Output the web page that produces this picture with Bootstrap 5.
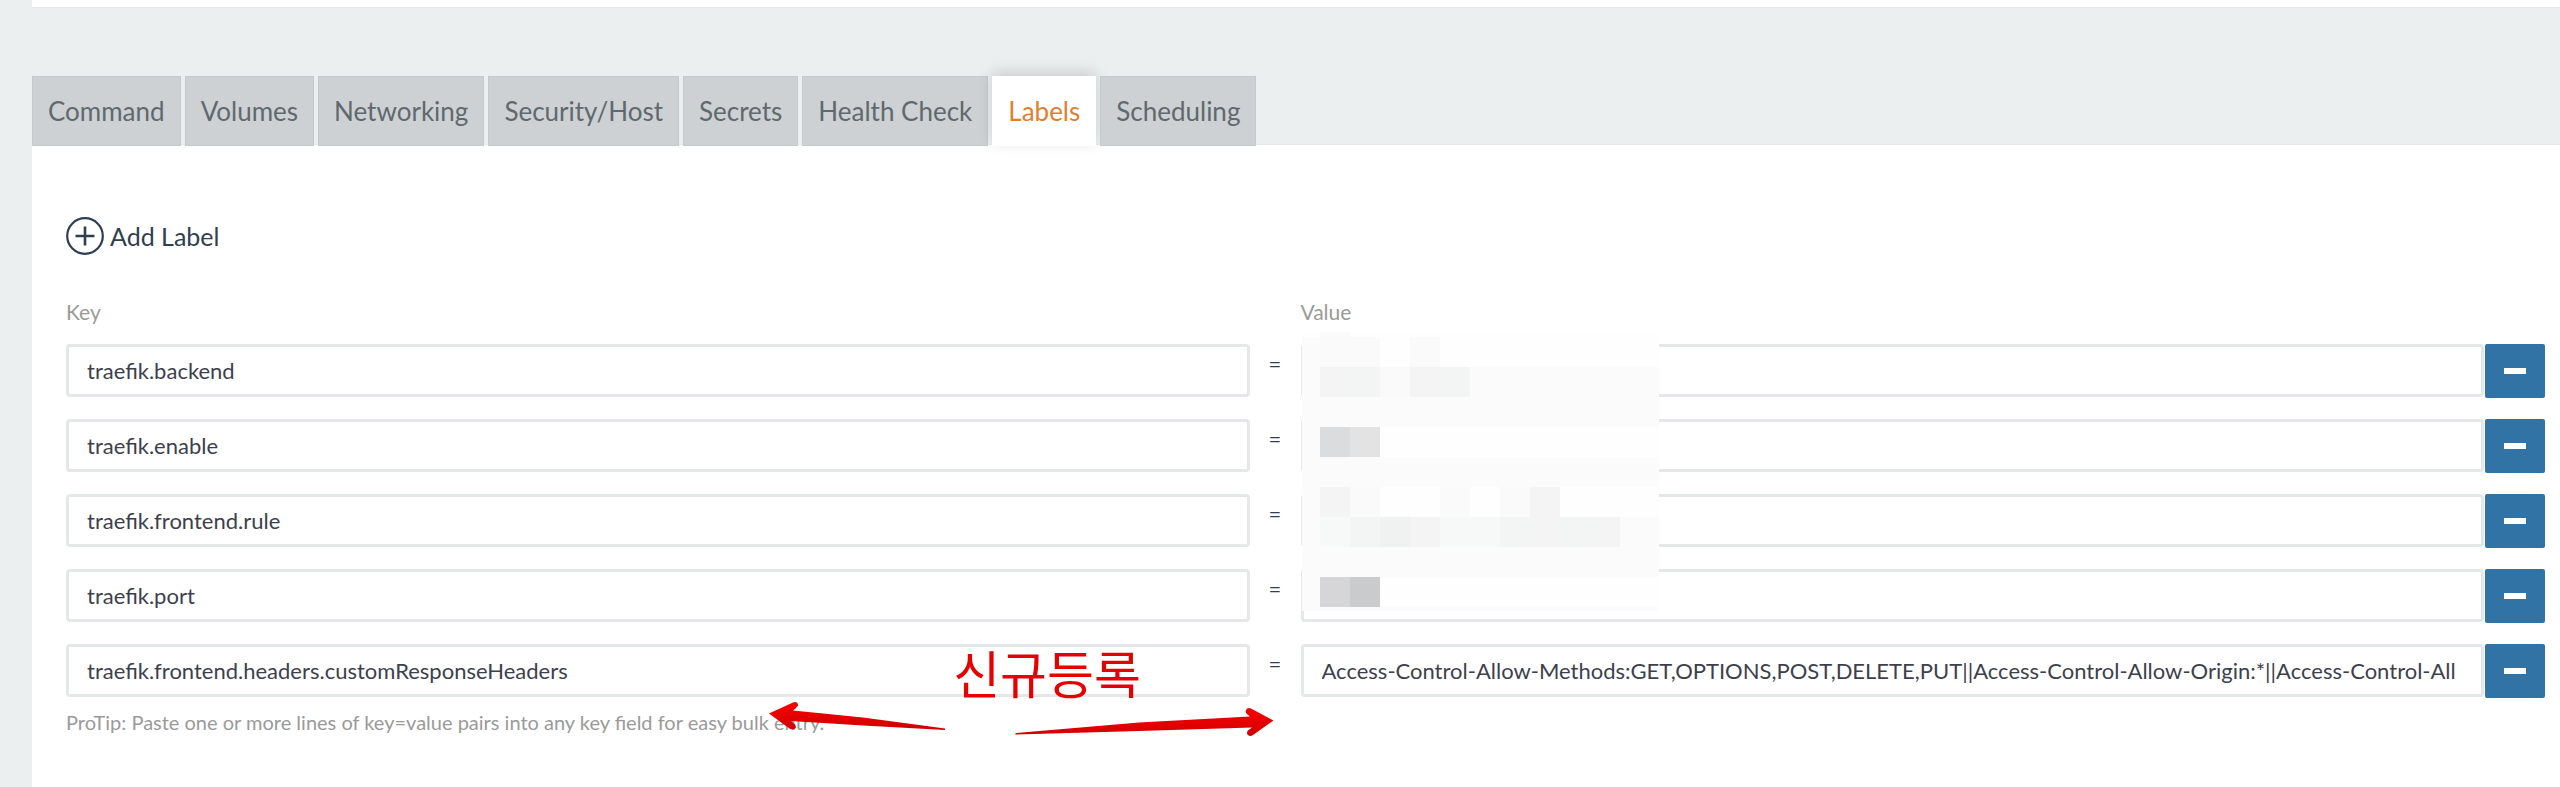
<!DOCTYPE html>
<html lang="en">
<head>
<meta charset="utf-8">
<meta name="viewport" content="width=device-width, initial-scale=1">
<title>Labels</title>
<link href="https://cdn.jsdelivr.net/npm/bootstrap@5.3.0/dist/css/bootstrap.min.css" rel="stylesheet">
<style>
  body { background: #ebeff0; color: #3d3f4d; font-family: Lato, "Noto Sans CJK KR", sans-serif; font-size: 22px; line-height: 28px; overflow-x: hidden; }
  .page-col { margin-left: 32px; }
  .prev-panel { height: 8px; background: #fff; border-bottom: 1px solid #e6eaea; margin-bottom: 68px; }
  .tab-strip { gap: 4px; margin-bottom: -2px; z-index: 1; }
  .tab-strip .nav-link { background: #cdd1d3; border: 1px solid #c4c9ca; border-radius: 0; color: #5f696e; font-size: 26px; line-height: 32px; padding: 18px 15px; }
  .tab-strip .nav-link.active { background: #fff; border-color: #fff; color: #e07f2f; box-shadow: 0 -4px 14px rgba(0, 0, 0, .14); }
  .label-panel { background: #fff; border-top: 1px solid #e6e9e9; padding: 72px 15px 48px 34px; }
  .add-btn { color: #2f3e51; font-size: 25px; line-height: 38px; gap: 6px; }
  .head-text { color: #9a9a9a; font-size: 21px; line-height: 26px; }
  .tip-text { color: #9a9a9a; font-size: 20px; line-height: 26px; margin-top: 12px; }
  .head-row { margin: 44px 0 19px; }
  .eq-col { width: 51px; line-height: 40px; color: #2f3e51; text-align: center; font-size: 22px; }
  .del-col { width: 61px; padding-left: 1px; }
  .pair-list { gap: 22px; }
  .pair-field { height: 53px; border: 3px solid #e5e8e8; border-radius: 4px; padding: 0 18px; color: #3d3f4d; font-size: 22px; }
  .del-btn { width: 60px; height: 54px; margin-bottom: -1px; background: #3273a5; border-radius: 2px; }
  .mosaic { left: 1px; top: -12px; }
  .note { left: 701px; top: 303px; pointer-events: none; }
  .note-text { color: #e60000; font-family: "Noto Sans CJK KR", sans-serif; font-size: 51px; line-height: 50px; padding-left: 52px; }
</style>
</head>
<body class="min-vh-100 d-flex flex-column">
<div class="page-col prev-panel"></div>
<ul class="nav tab-strip page-col position-relative">
  <li class="nav-item"><a class="nav-link" href="#command">Command</a></li>
  <li class="nav-item"><a class="nav-link" href="#volumes">Volumes</a></li>
  <li class="nav-item"><a class="nav-link" href="#networking">Networking</a></li>
  <li class="nav-item"><a class="nav-link" href="#security">Security/Host</a></li>
  <li class="nav-item"><a class="nav-link" href="#secrets">Secrets</a></li>
  <li class="nav-item"><a class="nav-link" href="#health">Health Check</a></li>
  <li class="nav-item"><a class="nav-link active" aria-current="page" href="#labels">Labels</a></li>
  <li class="nav-item"><a class="nav-link" href="#scheduling">Scheduling</a></li>
</ul>
<main class="page-col label-panel flex-grow-1" id="labels">
  <button type="button" class="btn add-btn d-flex align-items-center border-0 p-0">
    <svg width="38" height="38" viewBox="0 0 38 38" fill="none" stroke="currentColor" aria-hidden="true"><circle cx="19" cy="19" r="17.8" stroke-width="2.2"/><path d="M9.5 19h19M19 9.5v19" stroke-width="2.6"/></svg>
    Add Label
  </button>
  <div class="d-flex head-row head-text">
    <div class="flex-fill w-50">Key</div>
    <div class="eq-col flex-shrink-0"></div>
    <div class="flex-fill w-50">Value</div>
    <div class="del-col flex-shrink-0"></div>
  </div>
  <div class="d-flex flex-column pair-list position-relative">
    <div class="d-flex">
      <div class="flex-fill w-50"><input class="form-control pair-field" aria-label="Key 1" value="traefik.backend"></div>
      <div class="eq-col flex-shrink-0">=</div>
      <div class="flex-fill w-50 position-relative">
        <input class="form-control pair-field" aria-label="Value 1">
        <svg class="mosaic position-absolute z-1" width="357" height="279" viewBox="0 0 357 279" shape-rendering="crispEdges" aria-hidden="true">
          <path fill="#fefefe" d="M0 0h357v279H0z"/>
          <path fill="#fbfbfb" d="M0 5h18v274H0zM18 0h30v5H18zM18 65h339v30H18zM168 35h189v30H168zM18 125h339v30H18zM18 185h339v60H18zM18 275h339v4H18z"/>
          <path fill="#fafafa" d="M18 5h60v30H18zM108 5h30v30h-30zM48 155h30v30H48zM138 155h30v30h-30zM198 155h30v30h-30zM78 35h30v30H78z"/>
          <path fill="#f4f4f4" d="M18 35h30v30H18zM108 35h30v30h-30zM18 155h30v30H18zM228 155h30v30h-30zM108 185h30v30h-30zM228 185h30v30h-30zM288 185h30v30h-30z"/>
          <path fill="#f3f5f4" d="M48 35h30v30H48zM138 35h30v30h-30zM48 185h30v30H48zM198 185h30v30h-30zM258 185h30v30h-30z"/>
          <path fill="#f0f2f1" d="M78 185h30v30H78z"/>
          <path fill="#f7f9f8" d="M18 185h30v30H18zM138 185h60v30h-60z"/>
          <path fill="#dbdcdd" d="M18 95h30v30H18z"/><path fill="#e3e3e4" d="M48 95h30v30H48z"/>
          <path fill="#d6d6d8" d="M18 245h30v30H18z"/><path fill="#cacbcc" d="M48 245h30v30H48z"/>
        </svg>
      </div>
      <div class="del-col flex-shrink-0"><button type="button" class="btn del-btn border-0 p-0 d-flex align-items-center justify-content-center" aria-label="Remove label 1"><svg width="22" height="6" aria-hidden="true"><path fill="#fff" d="M0 0h22v6H0z"/></svg></button></div>
    </div>
    <div class="d-flex">
      <div class="flex-fill w-50"><input class="form-control pair-field" aria-label="Key 2" value="traefik.enable"></div>
      <div class="eq-col flex-shrink-0">=</div>
      <div class="flex-fill w-50"><input class="form-control pair-field" aria-label="Value 2"></div>
      <div class="del-col flex-shrink-0"><button type="button" class="btn del-btn border-0 p-0 d-flex align-items-center justify-content-center" aria-label="Remove label 2"><svg width="22" height="6" aria-hidden="true"><path fill="#fff" d="M0 0h22v6H0z"/></svg></button></div>
    </div>
    <div class="d-flex">
      <div class="flex-fill w-50"><input class="form-control pair-field" aria-label="Key 3" value="traefik.frontend.rule"></div>
      <div class="eq-col flex-shrink-0">=</div>
      <div class="flex-fill w-50"><input class="form-control pair-field" aria-label="Value 3"></div>
      <div class="del-col flex-shrink-0"><button type="button" class="btn del-btn border-0 p-0 d-flex align-items-center justify-content-center" aria-label="Remove label 3"><svg width="22" height="6" aria-hidden="true"><path fill="#fff" d="M0 0h22v6H0z"/></svg></button></div>
    </div>
    <div class="d-flex">
      <div class="flex-fill w-50"><input class="form-control pair-field" aria-label="Key 4" value="traefik.port"></div>
      <div class="eq-col flex-shrink-0">=</div>
      <div class="flex-fill w-50"><input class="form-control pair-field" aria-label="Value 4"></div>
      <div class="del-col flex-shrink-0"><button type="button" class="btn del-btn border-0 p-0 d-flex align-items-center justify-content-center" aria-label="Remove label 4"><svg width="22" height="6" aria-hidden="true"><path fill="#fff" d="M0 0h22v6H0z"/></svg></button></div>
    </div>
    <div class="d-flex">
      <div class="flex-fill w-50"><input class="form-control pair-field" aria-label="Key 5" value="traefik.frontend.headers.customResponseHeaders"></div>
      <div class="eq-col flex-shrink-0">=</div>
      <div class="flex-fill w-50"><input class="form-control pair-field" aria-label="Value 5" value="Access-Control-Allow-Methods:GET,OPTIONS,POST,DELETE,PUT||Access-Control-Allow-Origin:*||Access-Control-All"></div>
      <div class="del-col flex-shrink-0"><button type="button" class="btn del-btn border-0 p-0 d-flex align-items-center justify-content-center" aria-label="Remove label 5"><svg width="22" height="6" aria-hidden="true"><path fill="#fff" d="M0 0h22v6H0z"/></svg></button></div>
    </div>
    <!-- Red note: caption with an arrow to each side -->
    <div class="note position-absolute z-1">
      <div class="note-text text-center" lang="ko">신규등록</div>
      <svg class="d-block" width="508" height="44" viewBox="766 696 508 44" aria-hidden="true">
        <defs><linearGradient id="red" x1="0" y1="0" x2="0" y2="1"><stop offset="0" stop-color="#fa0000"/><stop offset="1" stop-color="#cf0000"/></linearGradient></defs>
        <path fill="url(#red)" d="M768 712.500L792 701.500Q795.500 700 797 703Q797.500 705.500 795 707L792 709.500L862 716.500L944 727.500L944 729L862 724.500L790 720L794 723.500Q796 726.500 793.500 728Q791 729 788.500 727.500Z"/>
        <path fill="url(#red)" d="M1272.500 719.500L1250 707.500Q1246.500 706 1245 709Q1244 711.500 1246 713L1249 715.500L1138 721.500L1014.500 732L1014.500 733.500L1138 730L1251 726.500L1247 729.500Q1245 732 1247 734Q1249 736 1252 734Z"/>
      </svg>
    </div>
  </div>
  <p class="tip-text mb-0">ProTip: Paste one or more lines of key=value pairs into any key field for easy bulk entry.</p>
</main>
<script src="https://cdn.jsdelivr.net/npm/bootstrap@5.3.0/dist/js/bootstrap.bundle.min.js"></script>
</body>
</html>
